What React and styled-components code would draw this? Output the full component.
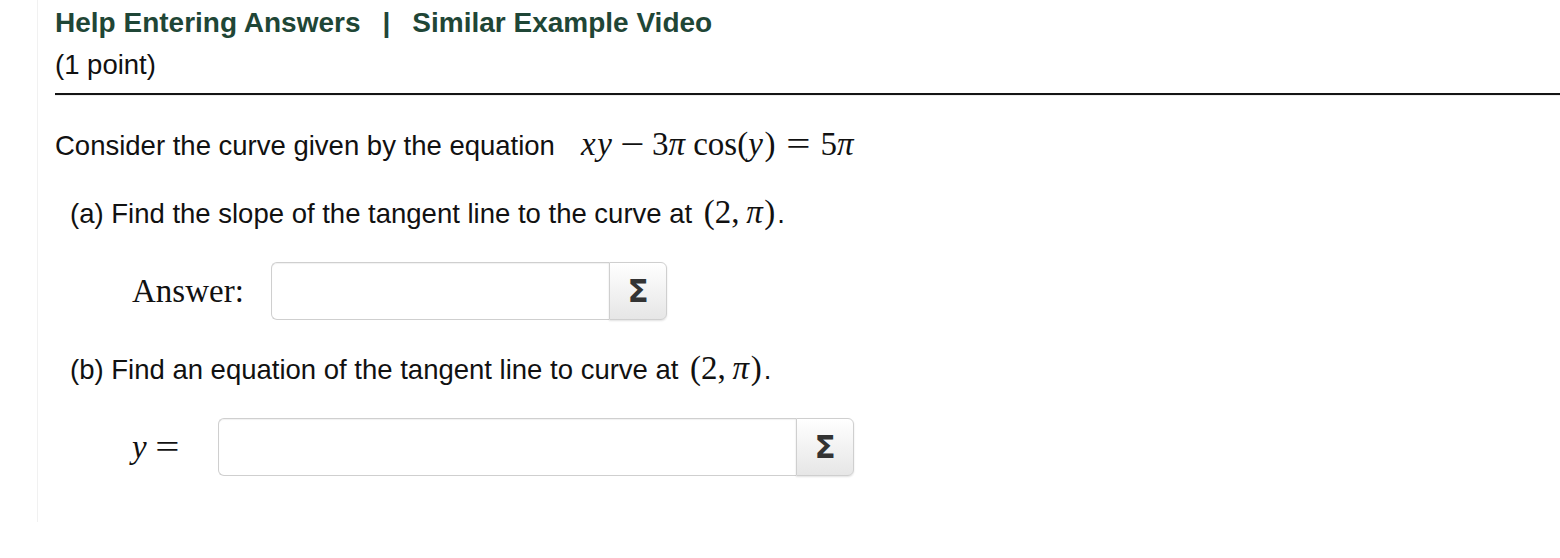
import React from 'react';
import styled, { createGlobalStyle } from 'styled-components';

const GlobalStyle = createGlobalStyle`
  html, body {
    margin: 0;
    padding: 0;
    background: #fff;
  }
  body {
    font-family: "Liberation Sans", Helvetica, Arial, sans-serif;
    color: #111;
  }
`;

const Problem = styled.main`
  margin-left: 37px;
  height: 522px;
  border-left: 1px solid #f1f1f1;
  padding-left: 17px;
  box-sizing: border-box;
`;

const Header = styled.header`
  padding-top: 2px;
  font-size: 27.5px;
  line-height: 42px;
`;

const Links = styled.div`
  font-weight: bold;
  font-size: 28px;
`;

const HelpLink = styled.a`
  color: #1f4636;
  text-decoration: none;
`;

const Sep = styled.span`
  color: #1f4636;
  margin: 0 22px;
`;

const Rule = styled.hr`
  margin: 7px 0 0;
  border: 0;
  border-top: 2px solid #141414;
  border-bottom: 1px solid #eee;
  height: 0;
`;

const Text = styled.p`
  margin: ${p => p.$top}px 0 0;
  padding-left: ${p => p.$indent || 0}px;
  font-size: 27.5px;
  line-height: 40px;
  height: 40px;
  white-space: nowrap;
`;

const Math = styled.span`
  font-family: "Liberation Serif", "Times New Roman", serif;
  font-size: 33px;
  line-height: 1;
  white-space: nowrap;
  margin-left: ${p => p.$gap || 0}px;
  margin-right: ${p => p.$after || 0}px;
`;

const V = styled.i`
  font-style: italic;
  letter-spacing: 0.05em;
`;

const Op = styled.span`
  display: inline-block;
  margin: 0 ${p => p.$space}em;
  transform: scaleX(1.3);
`;

const Thin = styled.span`
  display: inline-block;
  width: ${p => p.$w}em;
`;

const AnswerRow = styled.div`
  display: flex;
  align-items: center;
  margin-top: ${p => p.$top}px;
  padding-left: 77px;
  height: 58px;
`;

const Label = styled.span`
  font-family: "Liberation Serif", "Times New Roman", serif;
  font-size: 33px;
  width: ${p => p.$width}px;
  flex: none;
`;

const Field = styled.div`
  display: flex;
  height: 58px;
  box-sizing: border-box;
`;

const Input = styled.input`
  width: ${p => p.$width}px;
  height: 58px;
  box-sizing: border-box;
  border: 1px solid #cfcfcf;
  border-right: 0;
  border-radius: 6px 0 0 6px;
  background: #fff;
  box-shadow: inset 0 1px 1px rgba(0, 0, 0, 0.06);
  font-size: 20px;
  padding: 0 10px;
  outline: none;
`;

const SigmaButton = styled.button`
  width: 58px;
  height: 58px;
  box-sizing: border-box;
  border: 1px solid #cfcfcf;
  border-radius: 0 6px 6px 0;
  background: linear-gradient(#ffffff, #e6e6e6);
  box-shadow: 0 1px 2px rgba(0, 0, 0, 0.12);
  color: #333;
  font-family: "DejaVu Sans", "Liberation Sans", sans-serif;
  font-weight: bold;
  font-size: 31px;
  line-height: 1;
  padding: 0;
  display: flex;
  align-items: center;
  justify-content: center;
`;

const Point = () => (
  <Math $gap={4} $after={2}>
    (2,<Thin $w={0.2} /><V>π</V>)
  </Math>
);

const AnswerField = ({ width }) => (
  <Field>
    <Input type="text" $width={width} />
    <SigmaButton type="button">Σ</SigmaButton>
  </Field>
);

export default function App() {
  return (
    <>
      <GlobalStyle />
      <Problem>
        <Header>
          <Links>
            <HelpLink href="#">Help Entering Answers</HelpLink>
            <Sep>|</Sep>
            <HelpLink href="#">Similar Example Video</HelpLink>
          </Links>
          <div>(1 point)</div>
        </Header>
        <Rule />

        <Text $top={30}>
          Consider the curve given by the equation
          <Math $gap={26}>
            <V>xy</V>
            <Op $space={0.3}>−</Op>3<V>π</V>
            <Thin $w={0.2} />cos(<V>y</V>)
            <Op $space={0.4}>=</Op>5<V>π</V>
          </Math>
        </Text>

        <Text $top={28} $indent={15}>
          (a) Find the slope of the tangent line to the curve at <Point />.
        </Text>

        <AnswerRow $top={28}>
          <Label $width={139}>Answer:</Label>
          <AnswerField width={338} />
        </AnswerRow>

        <Text $top={30} $indent={15}>
          (b) Find an equation of the tangent line to curve at <Point />.
        </Text>

        <AnswerRow $top={28}>
          <Label $width={86}>
            <V>y</V>
            <Op $space={0.3}>=</Op>
          </Label>
          <AnswerField width={578} />
        </AnswerRow>
      </Problem>
    </>
  );
}
